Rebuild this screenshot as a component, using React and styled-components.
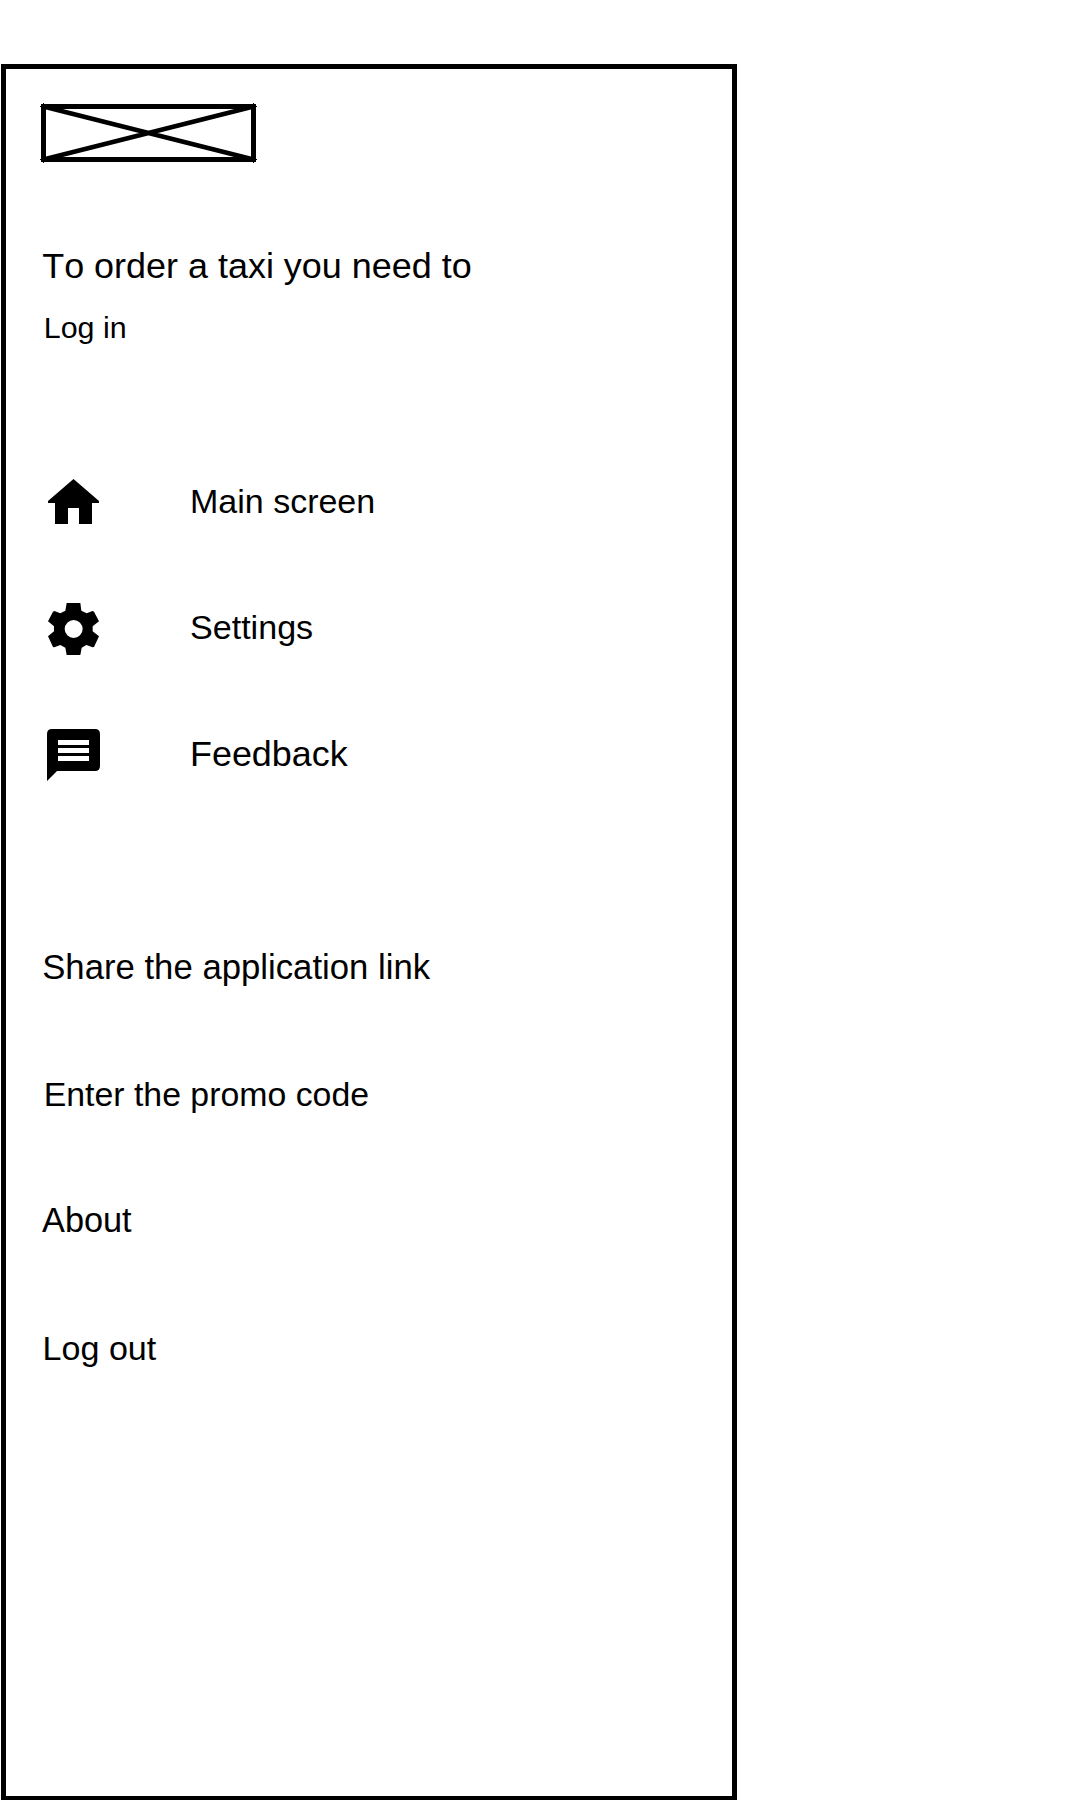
import React from "react";
import styled, { createGlobalStyle } from "styled-components";

const GlobalStyle = createGlobalStyle`
  *, *::before, *::after { box-sizing: border-box; }
  body {
    margin: 0;
    background: #fff;
    color: #000;
    font-family: "Liberation Sans", Arial, sans-serif;
    font-kerning: none;
  }
`;

const Page = styled.div`
  display: flow-root;
  width: 1080px;
  height: 1800px;
  overflow: hidden;
`;

const Drawer = styled.aside`
  display: flex;
  flex-direction: column;
  align-items: flex-start;
  width: 736px;
  height: 1736px;
  margin: 64px 0 0 1px;
  padding: 35px 35px 0;
  border: 5px solid #000;
  border-bottom-width: 4px;
`;

const Logo = styled.svg`
  display: block;
  width: 215px;
  height: 58px;
  fill: none;
  stroke: #000;
  overflow: visible;
`;

const Account = styled.header`
  display: flex;
  flex-direction: column;
  gap: 21px;
  margin-top: 84px;
`;

const Label = styled.span`
  display: block;
  padding-left: ${(p) => p.$indent || 0}px;
  margin-top: ${(p) => p.$shift || 0}px;
  font-size: ${(p) => p.$size}px;
  line-height: 40px;
  white-space: nowrap;
`;

const Nav = styled.nav`
  display: grid;
  grid-template-rows: 127px 126px 52px;
  margin-top: 129px;
`;

const NavItem = styled.a`
  display: grid;
  grid-template-columns: 149px auto;
  align-items: start;
`;

const Icon = styled.svg`
  display: block;
  width: ${(p) => p.$w}px;
  height: ${(p) => p.$h}px;
  margin: ${(p) => p.$top || 0}px 0 0 ${(p) => p.$left}px;
  fill: #000;
`;

const Links = styled.div`
  display: grid;
  grid-template-rows: 127px 126px 128px 40px;
  margin-top: 166px;
`;

const HomeIcon = () => (
  <Icon $w={51} $h={45} $top={3} $left={7} viewBox="0 0 51 45">
    <path d="M25.5 0 51 22v2h-7v21H31V29H20v16H7V24H0v-2z" />
  </Icon>
);

const GearIcon = () => (
  <Icon $w={51} $h={52} $left={7} viewBox="54 39 153 156">
    <path
      fillRule="evenodd"
      d="M110 39H151L154 62 170 70 188 63 192 65 207 94 188 109V124L207 139 192 171 188 172 169 165 155 173 151 195H110L106 173 91 165 73 172 69 171 54 139 72 124V109L54 94 69 65 73 63 91 70 106 62ZM131 90a27 27 0 1 0 0 54a27 27 0 1 0 0-54Z"
    />
  </Icon>
);

const ChatIcon = () => (
  <Icon $w={53} $h={52} $left={6} viewBox="0 0 53 52">
    <path
      fillRule="evenodd"
      d="M5 0H48Q53 0 53 5V37Q53 42 48 42H10L0 52V5Q0 0 5 0ZM11 11V16H42V11ZM11 19V24H42V19ZM11 27V32H42V27Z"
    />
  </Icon>
);

const navItems = [
  { text: "Main screen", size: 34, shift: 5, Glyph: HomeIcon },
  { text: "Settings", size: 34.1, shift: 4, Glyph: GearIcon },
  { text: "Feedback", size: 35.9, shift: 5, Glyph: ChatIcon },
];

const links = [
  { text: "Share the application link", size: 34.72, indent: 1.2 },
  { text: "Enter the promo code", size: 33.85, indent: 2.7 },
  { text: "About", size: 34.3, indent: 1 },
  { text: "Log out", size: 34.1, indent: 1.6 },
];

export default function App() {
  return (
    <Page>
      <GlobalStyle />
      <Drawer>
        <Logo viewBox="0 0 215 58">
          <path strokeWidth="5" d="M2.5 2.5H212.5V55.5H2.5Z" />
          <path strokeWidth="4.6" d="M2.5 2.5 212.5 55.5M212.5 2.5 2.5 55.5" />
          <path strokeWidth="1" d="M-1 2.5H216M-1 55.5H216M2.5-1V59M212.5-1V59" />
        </Logo>
        <Account>
          <Label $size={35.95} $indent={1.2}>To order a taxi you need to</Label>
          <Label $size={30.4} $indent={2.8}>Log in</Label>
        </Account>
        <Nav>
          {navItems.map(({ text, size, shift, Glyph }) => (
            <NavItem key={text}>
              <Glyph />
              <Label $size={size} $shift={shift}>{text}</Label>
            </NavItem>
          ))}
        </Nav>
        <Links>
          {links.map(({ text, size, indent }) => (
            <Label key={text} $size={size} $indent={indent}>{text}</Label>
          ))}
        </Links>
      </Drawer>
    </Page>
  );
}
